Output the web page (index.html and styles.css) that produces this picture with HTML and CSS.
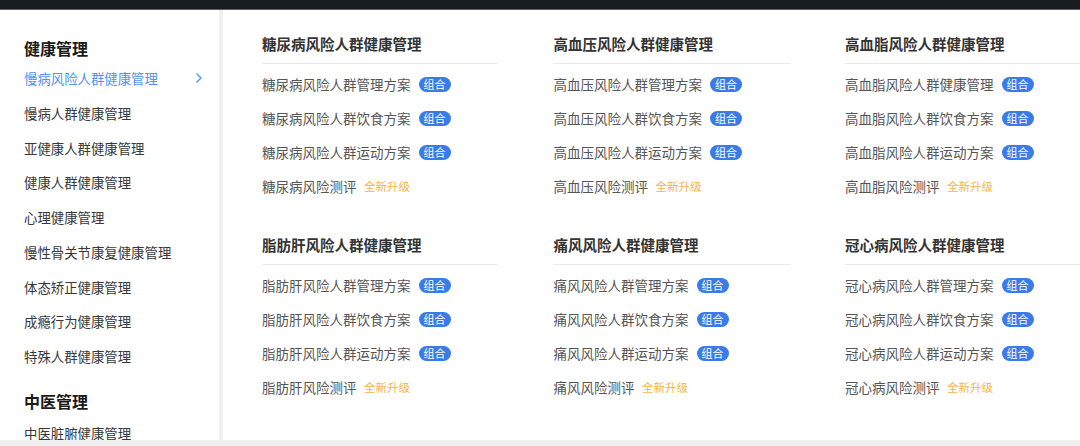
FILE: index.html
```html
<!DOCTYPE html>
<html lang="zh-CN">
<head>
    <meta charset="UTF-8">
    <meta name="viewport" content="width=device-width, initial-scale=1.0">
    <link rel="stylesheet" href="styles.css">
</head>
<body>
    <div class="topbar"></div>
    <div class="panel">
        <div class="sidebar">
            <div class="side-title">健康管理</div>
            <ul class="side-list">
                <li class="side-item active">慢病风险人群健康管理
                    <svg class="chevron" width="8" height="12" viewBox="0 0 8 12"><path d="M1.5 1.5 L6 6 L1.5 10.5" fill="none" stroke="#4b94f5" stroke-width="1.3"/></svg>
                </li>
                <li class="side-item">慢病人群健康管理</li>
                <li class="side-item">亚健康人群健康管理</li>
                <li class="side-item">健康人群健康管理</li>
                <li class="side-item">心理健康管理</li>
                <li class="side-item">慢性骨关节康复健康管理</li>
                <li class="side-item">体态矫正健康管理</li>
                <li class="side-item">成瘾行为健康管理</li>
                <li class="side-item">特殊人群健康管理</li>
            </ul>
            <div class="side-title second">中医管理</div>
            <ul class="side-list">
                <li class="side-item">中医脏腑健康管理</li>
            </ul>
        </div>
        <div class="content">
            <div class="groups">
                <div class="group">
                    <div class="group-title">糖尿病风险人群健康管理</div>
                    <ul class="group-list">
                        <li>糖尿病风险人群管理方案<span class="badge">组合</span></li>
                        <li>糖尿病风险人群饮食方案<span class="badge">组合</span></li>
                        <li>糖尿病风险人群运动方案<span class="badge">组合</span></li>
                        <li>糖尿病风险测评<span class="new">全新升级</span></li>
                    </ul>
                </div>
                <div class="group">
                    <div class="group-title">高血压风险人群健康管理</div>
                    <ul class="group-list">
                        <li>高血压风险人群管理方案<span class="badge">组合</span></li>
                        <li>高血压风险人群饮食方案<span class="badge">组合</span></li>
                        <li>高血压风险人群运动方案<span class="badge">组合</span></li>
                        <li>高血压风险测评<span class="new">全新升级</span></li>
                    </ul>
                </div>
                <div class="group">
                    <div class="group-title">高血脂风险人群健康管理</div>
                    <ul class="group-list">
                        <li>高血脂风险人群健康管理<span class="badge">组合</span></li>
                        <li>高血脂风险人群饮食方案<span class="badge">组合</span></li>
                        <li>高血脂风险人群运动方案<span class="badge">组合</span></li>
                        <li>高血脂风险测评<span class="new">全新升级</span></li>
                    </ul>
                </div>
                <div class="group">
                    <div class="group-title">脂肪肝风险人群健康管理</div>
                    <ul class="group-list">
                        <li>脂肪肝风险人群管理方案<span class="badge">组合</span></li>
                        <li>脂肪肝风险人群饮食方案<span class="badge">组合</span></li>
                        <li>脂肪肝风险人群运动方案<span class="badge">组合</span></li>
                        <li>脂肪肝风险测评<span class="new">全新升级</span></li>
                    </ul>
                </div>
                <div class="group">
                    <div class="group-title">痛风风险人群健康管理</div>
                    <ul class="group-list">
                        <li>痛风风险人群管理方案<span class="badge">组合</span></li>
                        <li>痛风风险人群饮食方案<span class="badge">组合</span></li>
                        <li>痛风风险人群运动方案<span class="badge">组合</span></li>
                        <li>痛风风险测评<span class="new">全新升级</span></li>
                    </ul>
                </div>
                <div class="group">
                    <div class="group-title">冠心病风险人群健康管理</div>
                    <ul class="group-list">
                        <li>冠心病风险人群管理方案<span class="badge">组合</span></li>
                        <li>冠心病风险人群饮食方案<span class="badge">组合</span></li>
                        <li>冠心病风险人群运动方案<span class="badge">组合</span></li>
                        <li>冠心病风险测评<span class="new">全新升级</span></li>
                    </ul>
                </div>
            </div>
        </div>
    </div>
</body>
</html>
```

FILE: styles.css
```css
html, body {
    margin: 0;
    padding: 0;
    height: 100%;
    overflow: hidden;
}
body {
    background-color: #f0f0f0;
    font-family: "Noto Sans CJK SC", "Noto Sans", sans-serif;
    color: #333;
}
ul {
    list-style: none;
    margin: 0;
    padding: 0;
}
.topbar {
    height: 9px;
    background-color: #181b20;
    border-bottom: 1px solid #5e5f61;
}
.panel {
    display: flex;
    height: 430px;
}
.sidebar {
    width: 219px;
    flex-shrink: 0;
    background-color: #ffffff;
    padding: 25.5px 16px 0 24px;
    box-sizing: border-box;
    overflow: hidden;
}
.side-title {
    font-size: 16px;
    font-weight: 700;
    line-height: 24px;
    color: #1a1a1a;
    margin-bottom: 1.5px;
}
.side-title.second {
    margin-top: 15px;
    margin-bottom: 3.5px;
}
.side-item {
    display: flex;
    align-items: center;
    justify-content: space-between;
    font-size: 13.4px;
    line-height: 34.75px;
    color: #383838;
    white-space: nowrap;
}
.side-item.active {
    color: #4b94f5;
}
.content {
    flex: 1;
    margin-left: 4px;
    background-color: #ffffff;
    padding: 24px 0 0 39px;
    overflow: hidden;
}
.groups {
    display: grid;
    grid-template-columns: repeat(3, 236px);
    column-gap: 55.5px;
    row-gap: 32px;
}
.group-title {
    font-size: 14.5px;
    font-weight: 700;
    line-height: 20px;
    color: #333;
    padding-bottom: 9px;
    border-bottom: 1px solid #e9e9e9;
    white-space: nowrap;
}
.group-list {
    padding-top: 3px;
}
.group-list li {
    display: flex;
    align-items: center;
    font-size: 13.5px;
    line-height: 34px;
    height: 34px;
    color: #555;
    white-space: nowrap;
}
.badge {
    display: inline-block;
    margin-left: 8px;
    width: 32px;
    height: 15px;
    line-height: 15px;
    border-radius: 8px;
    background-color: #3a7bea;
    color: #ffffff;
    font-size: 11px;
    text-align: center;
}
.new {
    margin-left: 7.5px;
    font-size: 11.5px;
    color: #f5b44a;
}
```
